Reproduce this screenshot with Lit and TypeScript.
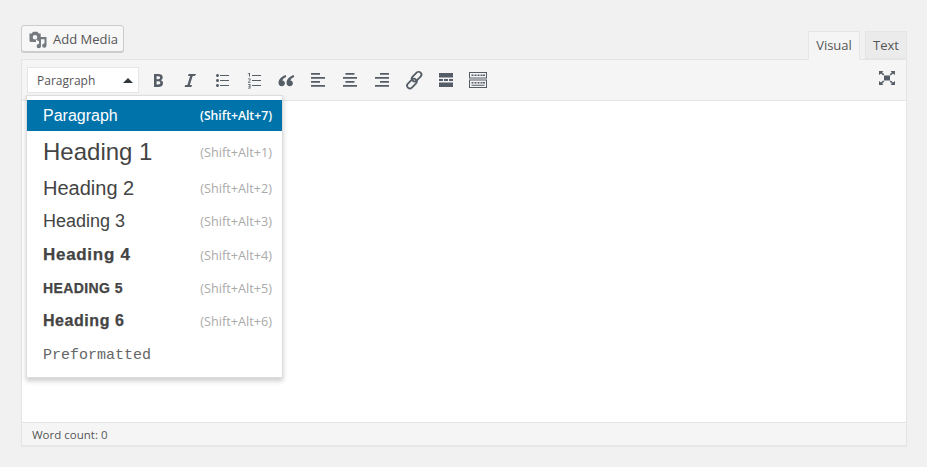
import { LitElement, html, css, svg } from "lit";
import { customElement } from "lit/decorators.js";

const rows: [string, string, string][] = [
  ["Paragraph", "(Shift+Alt+7)", "p"],
  ["Heading 1", "(Shift+Alt+1)", "h1"],
  ["Heading 2", "(Shift+Alt+2)", "h2"],
  ["Heading 3", "(Shift+Alt+3)", "h3"],
  ["Heading 4", "(Shift+Alt+4)", "h4"],
  ["HEADING 5", "(Shift+Alt+5)", "h5"],
  ["Heading 6", "(Shift+Alt+6)", "h6"],
  ["Preformatted", "", "pre"],
];

const icons = [
  svg`<path d="M6 4v13h4.54c1.37 0 2.46-.33 3.26-1 .8-.66 1.2-1.58 1.2-2.77 0-.84-.17-1.51-.51-2.01s-.9-.85-1.67-1.03v-.09c.57-.1 1.02-.4 1.36-.9s.51-1.13.51-1.91c0-1.14-.39-1.98-1.17-2.5C12.75 4.26 11.5 4 9.78 4H6zm2.57 5.15V6.26h1.36c.73 0 1.27.11 1.61.32.34.22.51.58.51 1.07 0 .54-.16.92-.47 1.15s-.82.35-1.51.35h-1.5zm0 2.19h1.6c1.44 0 2.16.5 2.16 1.51 0 .56-.17.98-.5 1.25s-.83.43-1.5.43H8.57v-3.19z"/>`,
  svg`<path d="M14.78 6h-2.13l-2.8 9h2.12l-.62 2H4.6l.62-2h2.14l2.8-9H8.03l.62-2h7.57z"/>`,
  svg`<path d="M5.5 7C4.67 7 4 6.33 4 5.5 4 4.68 4.67 4 5.5 4 6.32 4 7 4.68 7 5.5 7 6.33 6.32 7 5.5 7zM8 5h9v1H8V5zm-2.5 7c-.83 0-1.5-.67-1.5-1.5C4 9.68 4.67 9 5.5 9c.82 0 1.5.68 1.5 1.5 0 .83-.68 1.5-1.5 1.5zM8 10h9v1H8v-1zm-2.5 7c-.83 0-1.5-.67-1.5-1.5 0-.82.67-1.5 1.5-1.5.82 0 1.5.68 1.5 1.5 0 .83-.68 1.5-1.5 1.5zM8 15h9v1H8v-1z"/>`,
  svg`<path d="M8 5h9v1H8zM8 10h9v1H8zM8 15h9v1H8z"/><path d="M5 3v3.5H6V3zM3.8 3.8 5 3v.8l-1.2.6zM4 8.500h2.500v2L4.800 12h1.700v.8H4v-.8l1.600-1.500V9.300H4zM4 14h2.500v4.500H4v-.8h1.600v-1H4.500v-.7h1.100v-1.200H4z"/>`,
  svg`<path d="M9.800 5C6 6.200 2.500 9 2.500 12.800 2.500 15 3.900 16.300 5.700 16.300 7.400 16.300 8.900 15 8.900 13.200 8.900 11.500 7.800 10.500 6.400 10.400 6.700 9.200 8 8 10.200 7zM17.800 5C14 6.200 10.500 9 10.500 12.800 10.500 15 11.900 16.300 13.700 16.300 15.400 16.300 16.900 15 16.900 13.200 16.900 11.500 15.800 10.500 14.400 10.400 14.700 9.200 16 8 18.200 7z"/>`,
  svg`<path d="M3 3h9v1.800H3zM3 7h14v1.800H3zM3 11h9v1.800H3zM3 15h14v1.800H3z"/>`,
  svg`<path d="M5.500 3h9v1.800h-9zM3 7h14v1.800H3zM5.500 11h9v1.800h-9zM3 15h14v1.800H3z"/>`,
  svg`<path d="M8 3h9v1.800H8zM3 7h14v1.800H3zM8 11h9v1.800H8zM3 15h14v1.800H3z"/>`,
  svg`<g fill="none" stroke="#555d66" stroke-width="1.800"><rect x="9.800" y="1" width="5.600" height="11.200" rx="2.800" transform="rotate(45 12.600 6.600)"/><rect x="5.100" y="8" width="5.600" height="11.200" rx="2.800" transform="rotate(45 7.900 13.600)"/></g>`,
  svg`<path d="M3 3h14v4.500H3zM3 9h4v2H3zM8 9h4v2H8zM13 9h4v2h-4zM3 12.500h14V17H3z"/>`,
  svg`<path fill-rule="evenodd" d="M1 2h18v6.500H1zm1 1v4.500h16V3zM3.500 4.500h2V6h-2zM6.500 4.500h2V6h-2zM9.500 4.500h2V6h-2zM12.500 4.500h2V6h-2zM15 4.500h2V6h-2zM1 9.500h18V18H1zm1 1V17h16v-6.500zM3.500 12h2v1.500h-2zM6.500 12h2v1.500h-2zM9.500 12h2v1.500h-2zM12.500 12h2v1.500h-2zM15 12h2v1.500h-2zM3.500 14.700h13v1H3.500z"/>`,
];

@customElement("app-root")
export class AppRoot extends LitElement {
  static styles = css`
    :host {
      display: block;
      box-sizing: border-box;
      width: 927px;
      height: 467px;
      padding: 25px 20px 0 21px;
      background: #f1f1f1;
      font-family: "Open Sans", sans-serif;
      font-size: 13px;
      color: #555;
      overflow: hidden;
    }
    .head {
      display: flex;
      justify-content: space-between;
      height: 34px;
    }
    .media {
      box-sizing: border-box;
      display: flex;
      align-items: center;
      gap: 5px;
      height: 27px;
      width: 103px;
      padding: 0 6px;
      border: 1px solid #ccc;
      border-radius: 3px;
      background: #f7f7f7;
      box-shadow: 0 1px 0 #ccc;
      color: #555;
      font-size: 13px;
      white-space: nowrap;
    }
    .media svg {
      width: 20px;
      height: 20px;
      fill: #757a7f;
      flex: none;
    }
    .tabs {
      display: flex;
      align-items: flex-start;
      align-self: flex-end;
      gap: 5px;
      position: relative;
      z-index: 1;
      margin-bottom: -1px;
    }
    .tab {
      box-sizing: border-box;
      height: 28px;
      border: 1px solid #e5e5e5;
      background: #ebebeb;
      color: #555;
      display: flex;
      align-items: center;
      justify-content: center;
      line-height: 1;
    }
    .tab.visual {
      width: 52px;
      height: 29px;
      background: #f5f5f5;
      border-bottom-color: #f5f5f5;
    }
    .tab.text {
      width: 42px;
    }
    .box {
      position: relative;
      box-sizing: border-box;
      height: 387px;
      border: 1px solid #e5e5e5;
      background: #fff;
      box-shadow: 0 1px 1px rgba(0, 0, 0, 0.04);
      display: flex;
      flex-direction: column;
    }
    .toolbar {
      box-sizing: border-box;
      height: 41px;
      flex: none;
      display: flex;
      align-items: center;
      padding: 0 9px 0 5px;
      background: #f5f5f5;
      border-bottom: 1px solid #e5e5e5;
    }
    .select {
      box-sizing: border-box;
      width: 112px;
      height: 26px;
      margin-right: 3px;
      padding: 0 5px 0 9px;
      display: flex;
      align-items: center;
      justify-content: space-between;
      background: #fff;
      border: 1px solid #e5e5e5;
      font-size: 12px;
      color: #555;
    }
    .arrow {
      width: 0;
      height: 0;
      border-left: 5px solid transparent;
      border-right: 5px solid transparent;
      border-bottom: 5px solid #32373c;
    }
    .btn {
      width: 32px;
      height: 30px;
      flex: none;
      display: flex;
      align-items: center;
      justify-content: center;
    }
    .btn svg {
      width: 20px;
      height: 20px;
      fill: #555d66;
    }
    .spacer {
      flex: 1;
    }
    .full {
      width: 20px;
    }
    .content {
      flex: 1;
    }
    .status {
      box-sizing: border-box;
      height: 23px;
      flex: none;
      padding: 0 10px;
      display: flex;
      align-items: center;
      background: #f5f5f5;
      border-top: 1px solid #e5e5e5;
      font-size: 11.5px;
      color: #555;
    }
    .menu {
      position: absolute;
      left: 4px;
      top: 35px;
      box-sizing: border-box;
      width: 257px;
      height: 283px;
      padding: 4px 0 0;
      background: #fff;
      border: 1px solid #ddd;
      box-shadow: 0 3px 5px rgba(0, 0, 0, 0.2);
      z-index: 2;
      font-family: "Liberation Sans", Arial, sans-serif;
      color: #444;
    }
    .row {
      display: flex;
      align-items: center;
      justify-content: space-between;
      padding: 0 10px 0 16px;
      white-space: nowrap;
    }
    .row .key {
      font-family: "Open Sans", sans-serif;
      font-size: 12.7px;
      font-weight: 400;
      letter-spacing: 0;
      color: #aaa;
      -webkit-text-stroke: 0;
    }
    .row.sel {
      background: #0073aa;
      color: #fff;
    }
    .row.sel .key {
      color: #fff;
      font-size: 12.2px;
      font-weight: 600;
    }
    .p { height: 31px; font-size: 16px; }
    .h1 { height: 41px; font-size: 24px; }
    .h2 { height: 32px; font-size: 20px; }
    .h3 { height: 34px; font-size: 18px; }
    .h4 { height: 33px; font-size: 17px; font-weight: 700; letter-spacing: 0.7px; -webkit-text-stroke: 0.25px #444; }
    .h5 { height: 33px; font-size: 14px; font-weight: 700; letter-spacing: 0.4px; -webkit-text-stroke: 0.25px #444; }
    .h6 { height: 34px; font-size: 16px; font-weight: 700; letter-spacing: 0.55px; -webkit-text-stroke: 0.25px #444; }
    .pre {
      height: 35px;
      font-family: "Liberation Mono", "Courier New", monospace;
      font-size: 15px;
      color: #666;
    }
  `;

  render() {
    return html`
      <div class="head">
        <div class="media">
          <svg viewBox="0 0 20 20">
            <path fill-rule="evenodd" d="M1.500 4.500h2.300L5 2.700h4.500L10.700 4.500h2v7.500H9.500v-1.200h-1.500V13H3a1.500 1.500 0 0 1-1.500-1.500zM7 6a2.300 2.300 0 1 0 0 4.600A2.300 2.300 0 0 0 7 6z"/>
            <path d="M11 8h7.500v8.500a2.200 2.200 0 1 1-2-2.100V10.200h-3.500V17a2.200 2.200 0 1 1-2-2.100z"/>
          </svg>
          <span>Add Media</span>
        </div>
        <div class="tabs">
          <div class="tab visual">Visual</div>
          <div class="tab text">Text</div>
        </div>
      </div>
      <div class="box">
        <div class="toolbar">
          <div class="select"><span>Paragraph</span><i class="arrow"></i></div>
          ${icons.map(
            (i) => html`<div class="btn"><svg viewBox="0 0 20 20">${i}</svg></div>`
          )}
          <div class="spacer"></div>
          <div class="btn full">
            <svg viewBox="0 0 20 20">
              <path d="M7 5.500h6v5H7zM2 1h4.500L5.100 2.300 7.300 4.500 6.200 5.600 4 3.400 2 5zM18 1v4L16 3.400 13.800 5.600 12.700 4.500 14.900 2.300 13.500 1zM2 15v-4l2 1.600 2.200-2.200 1.100 1.100L5.100 13.700 6.500 15zM18 15h-4.500l1.400-1.300-2.200-2.200 1.100-1.100L16 12.600l2-1.600z"/>
            </svg>
          </div>
        </div>
        <div class="content"></div>
        <div class="status">Word count: 0</div>
        <div class="menu">
          ${rows.map(
            ([t, k, c]) => html`<div class="row ${c} ${c === "p" ? "sel" : ""}">
              <span>${t}</span><span class="key">${k}</span>
            </div>`
          )}
        </div>
      </div>
    `;
  }
}
